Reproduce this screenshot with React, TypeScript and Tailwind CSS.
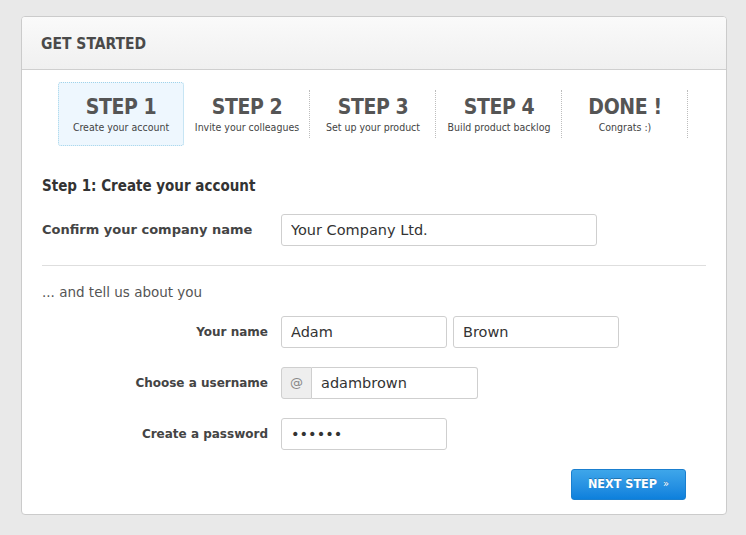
import React from 'react';

const heading = "font-['DejaVu_Sans_Condensed','Liberation_Sans_Narrow',sans-serif]";
const body = "font-['DejaVu_Sans','Verdana',sans-serif]";

const steps = [
  { title: 'STEP 1', sub: 'Create your account', active: true },
  { title: 'STEP 2', sub: 'Invite your colleagues' },
  { title: 'STEP 3', sub: 'Set up your product' },
  { title: 'STEP 4', sub: 'Build product backlog' },
  { title: 'DONE !', sub: 'Congrats :)' },
];

const inputCls =
  'h-[32px] border border-[#cfcfcf] rounded-[3px] bg-white px-[9px] text-[14.5px] text-[#333] outline-none';

const labelCls = 'w-[226px] mr-[13px] text-right text-[12px] font-bold text-[#444]';

const App: React.FC = () => {
  return (
    <div className={`min-h-[535px] w-[746px] bg-[#e9e9e9] pt-[16px] pl-[21px] ${body}`}>
      <div className="w-[706px] h-[499px] bg-white border border-[#cbcbcb] rounded-[4px] overflow-hidden">
        {/* header */}
        <div className="h-[53px] border-b border-[#cfcfcf] bg-gradient-to-b from-[#fafafa] to-[#f0f0f0] flex items-center pl-[19px] pt-[3px]">
          <h1 className={`${heading} text-[15.5px] font-bold text-[#4a4a4a]`}>GET STARTED</h1>
        </div>

        {/* steps */}
        <div className="flex pl-[36px] pt-[12px]">
          {steps.map((s) => (
            <div
              key={s.title}
              className={`w-[126px] h-[64px] flex flex-col items-center justify-center ${
                s.active
                  ? 'bg-[#eef7fe] border border-dotted border-[#9fd3ea] rounded-[3px]'
                  : 'relative'
              }`}
            >
              {!s.active && (
                <span className="absolute right-0 top-[8px] h-[48px] border-r border-dotted border-[#bdbdbd]" />
              )}
              <div className={`${heading} text-[21px] leading-[26px] font-bold text-[#555] tracking-[-0.4px]`}>
                {s.title}
              </div>
              <div className={`${heading} text-[10.5px] leading-[14px] text-[#444]`}>{s.sub}</div>
            </div>
          ))}
        </div>

        {/* form */}
        <div className="px-[20px]">
          <h2 className={`${heading} mt-[30px] text-[15px] font-bold text-[#333] leading-[20px]`}>
            Step 1: Create your account
          </h2>

          <div className="flex items-center mt-[18px]">
            <label className="w-[239px] text-[13px] font-bold text-[#444]">
              Confirm your company name
            </label>
            <input className={`${inputCls} w-[316px] ${body}`} defaultValue="Your Company Ltd." />
          </div>

          <div className="mt-[19px] border-t border-[#dedede]" />

          <p className="mt-[17px] text-[13.5px] text-[#555] leading-[18px]">... and tell us about you</p>

          <div className="mt-[15px] flex flex-col gap-[19px]">
            <div className="flex items-center">
              <label className={labelCls}>Your name</label>
              <input className={`${inputCls} w-[166px] ${body}`} defaultValue="Adam" />
              <input className={`${inputCls} w-[166px] ml-[6px] ${body}`} defaultValue="Brown" />
            </div>
            <div className="flex items-center">
              <label className={labelCls}>Choose a username</label>
              <div className="flex">
                <span className="h-[32px] w-[31px] border border-[#cfcfcf] rounded-l-[3px] bg-[#eeeeee] flex items-center justify-center text-[13px] text-[#888]">
                  @
                </span>
                <input
                  className={`${inputCls} w-[166px] border-l-0 rounded-l-none ${body}`}
                  defaultValue="adambrown"
                />
              </div>
            </div>
            <div className="flex items-center">
              <label className={labelCls}>Create a password</label>
              <input type="password" className={`${inputCls} w-[166px] ${body}`} defaultValue="secret" />
            </div>
          </div>

          <div className="flex justify-end pr-[20px] mt-[19px]">
            <button
              className={`${heading} h-[31px] w-[115px] rounded-[3px] border border-[#1a7fcf] bg-gradient-to-b from-[#3ea6ea] to-[#0c80dc] text-white text-[12.5px] font-bold flex items-center justify-center gap-[6px] [text-shadow:0_-1px_0_rgba(0,0,0,0.25)]`}
            >
              NEXT STEP <span className="text-[11px] font-normal">»</span>
            </button>
          </div>
        </div>
      </div>
    </div>
  );
};

export default App;
